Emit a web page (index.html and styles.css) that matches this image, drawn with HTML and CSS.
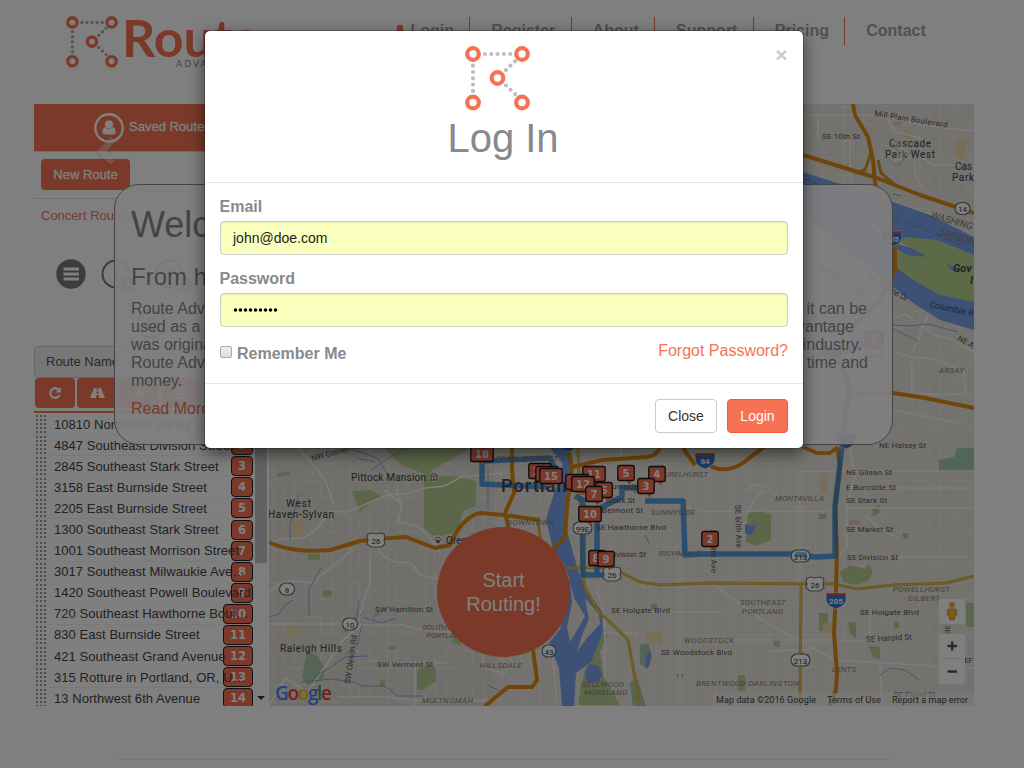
FILE: index.html
```html
<!DOCTYPE html>
<html lang="en">
<head>
<meta charset="utf-8">
<title>Route Advantage</title>
<link rel="stylesheet" href="styles.css">
</head>
<body>
<svg class="defs" aria-hidden="true">
  <symbol id="mark" viewBox="0 0 65 65">
    <g fill="none" stroke="#bcbec0" stroke-width="4.2" stroke-linecap="round" stroke-dasharray="0 6.3">
      <path d="M20 8H46M8 19.7V46M50 15.3L39 26M41 39.5L52 50"/>
    </g>
    <g fill="#fff" stroke="#f67252" stroke-width="4.2">
      <circle cx="8" cy="8" r="5.8"/><circle cx="57" cy="8" r="5.8"/><circle cx="32.5" cy="32" r="5.8"/><circle cx="8" cy="56.5" r="5.8"/><circle cx="57" cy="56.5" r="5.8"/>
    </g>
  </symbol>
  <symbol id="markdark" viewBox="0 0 65 65">
    <g fill="none" stroke="#a9abad" stroke-width="4.2" stroke-linecap="round" stroke-dasharray="0 6.3">
      <path d="M20 8H46M8 19.7V46M50 15.3L39 26M41 39.5L52 50"/>
    </g>
    <g fill="#fff" stroke="#f67252" stroke-width="4.2">
      <circle cx="8" cy="8" r="5.8"/><circle cx="57" cy="8" r="5.8"/><circle cx="32.5" cy="32" r="5.8"/><circle cx="8" cy="56.5" r="5.8"/><circle cx="57" cy="56.5" r="5.8"/>
    </g>
  </symbol>
  <symbol id="user" viewBox="0 0 16 16"><circle cx="8" cy="4.500" r="4.300"/><path d="M4.200 7.800C1.500 7.800 1 10 1 13c0 1.500 1 2.500 2.500 2.500h9c1.500 0 2.500-1 2.500-2.500 0-3-.5-5.200-3.200-5.200C10 9.800 6 9.800 4.200 7.800z"/></symbol>
</svg>

<header class="header">
  <svg class="logo" width="220" height="60" viewBox="0 0 220 60">
    <use href="#markdark" x="0" y="0" width="52" height="52"/>
    <text x="56" y="41" class="logo-name">Route</text>
    <text x="110" y="51" class="logo-sub">ADVANTAGE</text>
  </svg>
  <nav class="nav">
    <a class="nav-item"><svg width="12" height="13" fill="#f67252"><use href="#user" width="12" height="13"/></svg> Login</a>
    <a class="nav-item">Register</a>
    <a class="nav-item">About</a>
    <a class="nav-item">Support</a>
    <a class="nav-item">Pricing</a>
    <a class="nav-item">Contact</a>
  </nav>
</header>

<main class="main">
  <aside class="sidebar">
    <div class="saved">
      <svg width="30" height="30" viewBox="0 0 30 30"><circle cx="15" cy="15" r="13.700" fill="none" stroke="#fff" stroke-width="2.400"/><use href="#user" x="7.500" y="6.500" width="15" height="16" fill="#fff"/></svg>
      <span>Saved Routes</span>
    </div>
    <div class="new"><button class="new-btn">New Route</button></div>
    <a class="concert">Concert Route</a>
    <div class="tools">
      <svg width="190" height="80" viewBox="0 0 190 80">
        <circle cx="16" cy="16" r="14.700" fill="#77787b"/><path d="M8.500 11h15.500M8.500 16h15.500M8.500 21h15.500" stroke="#fff" stroke-width="2.800"/>
        <circle cx="61" cy="16" r="13.500" fill="#fff" stroke="#77787b" stroke-width="2"/>
        <path d="M61 8v4M61 14v9" stroke="#77787b" stroke-width="3"/>
        <rect x="67" y="19" width="11" height="14" rx="3" fill="#f67252"/><text x="69" y="30" class="tool-count">0</text>
        <circle cx="114" cy="16" r="13.500" fill="#fff" stroke="#77787b" stroke-width="2"/><path d="M106 20L120 10M108 13l11 8" stroke="#77787b" stroke-width="2"/>
        <rect x="120" y="19" width="17" height="14" rx="3" fill="#f67252"/><text x="122" y="30" class="tool-count">17</text>
        <circle cx="96" cy="66" r="13.500" fill="#fff" stroke="#77787b" stroke-width="2"/><circle cx="96" cy="66" r="5" fill="none" stroke="#77787b" stroke-width="4" stroke-dasharray="3 1"/>
      </svg>
    </div>
    <div class="route-name">Route Name</div>
    <div class="actions">
      <button><svg width="14" height="14" viewBox="0 0 14 14"><path d="M10.800 4A4.800 4.800 0 1 0 11.500 9" fill="none" stroke="#fff" stroke-width="2.300"/><path d="M13 1v5.500H7.500z" fill="#fff"/></svg></button>
      <button><svg width="15" height="12" viewBox="0 0 15 12"><path d="M4 1h2.700L6.500 3h2L8.300 1H11l4 10H9L8.700 8H6.300L6 11H0zM6.300 4.500v2h2.400v-2z" fill="#fff" fill-rule="evenodd"/></svg></button>
      <button><svg width="12" height="12"><path d="M6 1v10M1 6h10" stroke="#fff" stroke-width="3"/></svg></button>
      <button><svg width="12" height="12"><path d="M1 1h8l2 2v8H1zM3 1v3h5V1M3 11V7h6v4" fill="none" stroke="#fff" stroke-width="1.500"/></svg></button>
      <button></button>
    </div>
    <div class="stops">
      <div class="list">
        <div class="stop"><span>10810 Northeast Sandy B…</span><b>1</b></div>
        <div class="stop"><span>4847 Southeast Division Street</span><b>2</b></div>
        <div class="stop"><span>2845 Southeast Stark Street</span><b>3</b></div>
        <div class="stop"><span>3158 East Burnside Street</span><b>4</b></div>
        <div class="stop"><span>2205 East Burnside Street</span><b>5</b></div>
        <div class="stop"><span>1300 Southeast Stark Street</span><b>6</b></div>
        <div class="stop"><span>1001 Southeast Morrison Street</span><b>7</b></div>
        <div class="stop"><span>3017 Southeast Milwaukie Ave…</span><b>8</b></div>
        <div class="stop"><span>1420 Southeast Powell Boulevard</span><b>9</b></div>
        <div class="stop"><span>720 Southeast Hawthorne Boul…</span><b>10</b></div>
        <div class="stop"><span>830 East Burnside Street</span><b>11</b></div>
        <div class="stop"><span>421 Southeast Grand Avenue</span><b>12</b></div>
        <div class="stop"><span>315 Rotture in Portland, OR, U…</span><b>13</b></div>
        <div class="stop"><span>13 Northwest 6th Avenue</span><b>14</b></div>
      </div>
      <div class="scroll"><div class="thumb"></div><div class="arrow"></div></div>
    </div>
  </aside>

  <svg class="map" width="705" height="602" viewBox="269 104 705 602">
    <defs>
      <pattern id="grid" width="20" height="16" patternUnits="userSpaceOnUse"><path d="M0 3H20M0 11H20M4 0V16M10 0V16M16 0V16" stroke="#f7f5ef" stroke-width=".7" opacity=".6"/></pattern>
      <pattern id="wide" width="38" height="34" patternUnits="userSpaceOnUse"><path d="M0 5H17V22H38M28 0V22M8 5V34" fill="none" stroke="#f7f5ef" stroke-width=".9" opacity=".6"/></pattern>
      <g id="pin"><path d="M-6-7.500H6a2 2 0 0 1 2 2v11a2 2 0 0 1-2 2L3.500 11.500.5 7.500H-6a2 2 0 0 1-2-2v-11a2 2 0 0 1 2-2z" fill="#f67252"/><rect x="-8.200" y="-7.500" width="16.400" height="15" rx="2" fill="none" stroke="#181818" stroke-width="1.300"/></g>
      <g id="pinw"><path d="M-9-7.500H9a2 2 0 0 1 2 2v11a2 2 0 0 1-2 2H3L0 11.500-3 7.500H-9a2 2 0 0 1-2-2v-11a2 2 0 0 1 2-2z" fill="#f67252"/><rect x="-11.200" y="-7.500" width="22.400" height="15" rx="2" fill="none" stroke="#181818" stroke-width="1.300"/></g>
      <g id="interstate"><path d="M-9-7H9C12 2 8 6 0 9-8 6-12 2-9-7z" fill="#3478c8" stroke="#e9e5dc" stroke-width=".8"/><path d="M-9-7L-5-6 0-7 5-6 9-7 10-4H-10z" fill="#d84e4a"/></g>
      <g id="us26"><path d="M-8-6l4-1 4 1 4-1 4 1 1 3-1 3 1 4-4 3H-5l-4-3 1-4-1-3z" fill="#fff" stroke="#777" stroke-width="1.200"/><text y="4" class="shield">26</text></g>
    </defs>
    <rect x="269" y="104" width="705" height="602" fill="#e9e5dc"/>
    <rect x="269" y="448" width="225" height="258" fill="#e3dfd7"/>
    <rect x="269" y="104" width="225" height="602" fill="url(#wide)"/>
    <rect x="600" y="448" width="240" height="258" fill="url(#grid)"/>
    <rect x="495" y="448" width="105" height="258" fill="url(#wide)"/>
    <rect x="840" y="104" width="134" height="602" fill="url(#wide)"/>
    <rect x="803" y="104" width="60" height="90" fill="url(#wide)"/>

    <g fill="#b9cf94">
      <path d="M384 448h86l-20 12-25 14-24-9zM352 491l18-1 14 7-14 6-10 9zM424 462l8-5v19h23l21 5v25l-13 5-5 20-22 7-6-5-6-5z"/>
      <path d="M748 513l14-2 9 4v25l-14 6-11-4zM840 572l10-7 15 4 4-5 4 9-6 9-12 3-12-3zM417 670l14-5 5 4v12l-12 9h-7zM819 613h9v18h-9zM738 675h7v16h-7zM633 485l15-5 2 6-16 8zM868 646l12 1v12l-7-2zM848 622h8v16l-6-4zM966 603h8v24h-8zM872 508l8-3-1 8-6 4z"/>
      <path d="M277 473l14-2-2 4-12 2zM308 554h12v6h-12zM323 590l10 1-2 6-9-1zM389 646h6v4h-6zM380 680h5v7h-5zM651 604h6v5h-6zM774 638l6 2-1 8-6-3zM819 514h7v5h-7zM903 533h5v6h-5zM894 622h5v6h-5zM676 674h8v3h-8zM600 626l8 8-8 18 4 25 16 28H578l3-20 7-26zM455 630l9 7-4 9-8-4z"/>
      <path d="M823 206h10v4h-10zM941 264l10-1-1 6-9 1z"/>
    </g>
    <path d="M939 460l15-3 3-9h17v24h-35z" fill="#a5ccb0"/><path d="M307 652l10 3 8 13-2 12-16 5-5-8z" fill="#a9c8ab"/><path d="M640 645l8-3 4 15-4 12-8-5zM630 682l8-2 8 26H633z" fill="#a9c8ab"/>
    <g fill="#f0dab0"><path d="M291 519h12v18h-12zM285 627h15v10h-15zM645 633h18v11h-18zM823 623h10v10h-10zM820 473h8v20h-8zM955 139h12v15l-6 7-6-9zM903 129h8v9h-8z"/></g>
    <path d="M849 520h10v5h-10zM893 123l8-2v4h-8z" fill="#efc5bf"/>

    <g fill="none" stroke="#faf8f3" stroke-width="1.600" stroke-linecap="round" stroke-linejoin="round">
      <path d="M269 542l14-3 20-1c15-7 20-17 27-27l16 1c30-10 37-20 59-18l20-6 20-2 16-9 40-4M298 448l18 20 10 14 8 22M384 490l18 14-4 18 20 4 10 9 12 18M397 490l4 15M352 550c-18 16-26 20-34 28l-10 5c-20-5-30 0-39 10M269 624H343L352 625H402l16 4 20 3h50M362 625l-18 14-15 22-9 13-12 18-23-14-16 28M370 557v24l-12 40M378 548c5 12 18 16 32 14l10 13 18 4M340 697h45l25 3h90M370 660l14 3h64M415 706v-45"/>
      <path d="M482 655l4 14 20 4M552 650l5 56M621 448v34M597 590l8 28v60M600 633h37M640 612h80M680 560v146M714 585l56 40 66 35 80 5 58 3M770 651l45-2M800 472v130M700 511h130M800 471h174M860 488h114M850 508h124M866 515l12 13 20 10M875 557h90M870 612v25M845 641h30M880 665l2 41M850 448l5 28-8 26v46l-8 8M700 640h145M748 489l6-4 14 2 10 10M747 514l8-16 8-6"/>
      <path d="M803 115h70l70 13 31 3M818 118v20M850 137v45M886 116l8 15 36 10M893 152c20 5 28 4 33 8l8 5h25M915 165v11l8 12M803 182l40 14 40 4 50 15M893 318l12-4 28 20 20 6 21 12M893 352l18 5 24 2 29 13 1 22M912 362v42M928 315l-15 37M893 394h72M893 410l70 14"/>
    </g>
    <g fill="none" stroke="#8fa8df" stroke-width="1"><path d="M269 617l10-3 6-9 8-5M290 540v-15l9-31M309 616v-27l12-21M345 632l12-17 2-14M355 620l10-9M373 617l16-11M363 617l18 6 16-5M316 676l15-9 14-10 23-1M301 682l30-3 22 3 10 4h22l13 10h25M349 448l28 10 12 18M371 470l22-15 17-7M375 462l-18-4M362 625l-5 20-12 10M893 325l15 1 20-2 30 8M893 329l25 12M880 675l10-7 15 2 14 10M645 535l5 10M487 685l15 7M488 468v40"/></g>

    <g fill="#7ba2ef">
      <path d="M530 448h20l13 16-6 20-11 35 7 30 11 15 5 13-1 20-8 32-11 14 10 25 3 38h12l2-33 15-11 12-30-1-20-15-21-8-18-7-24-7-26 5-31 2-27-4-17z"/>
      <path d="M803 172l40 13 50 17 37 13 44 22v93l-34-10-27-17-20-16-45-37-45-35z"/><path d="M752 526l3-2v5l-4 6-6-2v-9zM646 656l5-6-1 14-5 5zM590 664l8 1 4 9-3 8-12 1-2-11z"/>
    </g>
    <path d="M570 582l4 16 11 18-10 18-5 8-3-15 5-25zM585 598l14 16 1 10-13 14-10 14 5-17 7-16z" fill="#e9e5dc"/>
    <path d="M893 243l14-6 30 3 37 15v47l-34-7-27-15-20-15z" fill="#b9d58e"/><path d="M850 208l60 40-20-4z" fill="#e9e5dc"/>
    <path d="M896 248l28 8-15-1zM947 264l10 5-5 1zM893 194l8 2M893 243l22 7 10 6-20-3z" fill="#7ba2ef" stroke="#7ba2ef"/>
    <path d="M803 178l90 38 81 35" fill="none" stroke="#6682b8" stroke-dasharray="7 4"/>

    <g fill="none" stroke-linejoin="round">
      <g stroke="#d6ac3e" stroke-width="3"><path d="M567 568l43-1 30 15 20 3 50-2 123 1 24 5 36-4 54-2 27-7M801 584l-1 122M578 448l2 60 2 59 3 20 12 23 16 15 15 15 5 27 7 39M510 515l28 6 3 25"/></g>
      <g stroke="#e3c15b" stroke-width="1.200"><path d="M567 568l43-1 30 15 20 3 50-2 123 1 24 5 36-4 54-2 27-7M801 584l-1 122M578 448l2 60 2 59 3 20 12 23 16 15 15 15 5 27 7 39"/></g>
      <g stroke="#e08a12" stroke-width="4"><path d="M269 542c15 8 35 10 61 8l30-9 16-2 30-2 29 11 15-3c8-20 20-30 30-32l23 2 37 5M512 448v22l2 23-9 20 5 20M568 448l4 19-5 40-2 30-12 12M533 650l4 30-5 7-24 0-23 19M572 467l31-7 44-3c10-2 10-5 13-9M683 448l12 17M703 459c8 10 20 14 37 6l24-18M803 447l14 6h13l8-6M837 448l3 19-5 40 2 43-1 40-2 43 3 40-1 17-6 16"/>
      <path d="M853 104l2 11 13 22 5 23 2 23 13 34 7 33v20l-15 30-28 27M803 155l74 23 43 17 54 18M842 420l6-20 12-7h33l27 4 54 11"/></g>
      <path d="M871 153l-6 17-10 3M878 160l3 13 14 12" stroke="#d59428" stroke-width="3"/>
      <path d="M875 340l-40 15 11 20 3 15-7 57-7 60v49l-19 1-26-3h-90l-15 1-2-54h-38M655 488h-33v9l-20 10-5 10v60M615 575h-32v-75l-8-4M482 455v29l66 3M484 461l66-3 5 12" stroke="#2683dc" stroke-width="5.500" opacity=".75"/>
    </g>

    <g class="town">
      <text x="286" y="507" textLength="25">West</text><text x="268" y="518" textLength="66">Haven-Sylvan</text><text x="280" y="652" textLength="62">Raleigh Hills</text><text x="446" y="544">Oregon Zoo</text><text x="351" y="481" textLength="75">Pittock Mansion</text>
      <text x="889" y="147" textLength="42">Cascade</text><text x="885" y="158" textLength="50">Park West</text><text x="955" y="170">Cas</text><text x="952" y="181" textLength="22">Park</text><text x="953" y="272" class="gov">Gov</text><text x="970" y="284" class="gov">I</text>
    </g>
    <g class="street">
      <text x="375" y="612" textLength="58">SW Hamilton St</text><text x="377" y="667" textLength="56">SW Vermont St</text><text transform="translate(350 684) rotate(-82)" textLength="49">SW Oleson Rd</text><text transform="translate(312 461) rotate(-15)">NW Cornell Rd</text>
      <text x="607" y="489">Burnside St</text><text x="607" y="503">Stark St</text><text x="602" y="513" textLength="41">Belmont St</text><text x="596" y="530" textLength="70">SE Hawthorne Blvd</text><text x="609" y="557" textLength="37">Division St</text><text x="611" y="613" textLength="59">SE Holgate Blvd</text><text x="661" y="655" textLength="71">SE Woodstock Blvd</text>
      <text transform="translate(735 505) rotate(88)" textLength="43">SE 60th Ave</text><text transform="translate(710 530) rotate(88)" textLength="43">SE 50th Ave</text>
      <text x="879" y="448" textLength="47">NE Halsey St</text><text x="846" y="475" textLength="46">NE Glisan St</text><text x="846" y="490" textLength="50">E Burnside St</text><text x="846" y="503" textLength="41">SE Stark St</text><text x="846" y="532" textLength="47">SE Market St</text><text x="847" y="560" textLength="51">SE Division St</text><text x="860" y="615" textLength="59">SE Holgate Blvd</text><text transform="translate(866 642) rotate(-3)" textLength="46">SE Harold St</text><text x="894" y="697">SE Flavel St</text><text x="961" y="663" textLength="12">SE F</text>
      <text x="822" y="139" textLength="38">SE 10th St</text><text transform="translate(874 116) rotate(9)" textLength="74">Mill Plain Boulevard</text><text transform="translate(867 279) rotate(30)" textLength="45">NE Marine Dr</text><text transform="translate(819 270) rotate(30)">NE Airport Way</text><text transform="translate(957 340) rotate(28)">NE A</text><text transform="translate(945 625) rotate(90)">3E</text>
    </g>
    <text transform="translate(929 307) rotate(12)" class="water">Columbia R</text>
    <g class="area">
      <text x="496" y="461" textLength="62">PEARL DISTRICT</text><text x="507" y="525" textLength="47">DOWNTOWN</text><text x="422" y="630">SOUTHWEST</text><text x="426" y="638">PORTLAND</text><text x="480" y="668" textLength="42">HILLSDALE</text><text x="422" y="703" textLength="51">MULTNOMAH</text><text x="582" y="687" textLength="47">SELLWOOD -</text><text x="584" y="695" textLength="43">MORELAND</text>
      <text x="655" y="477" textLength="53">LAURELHURST</text><text x="651" y="515" textLength="44">SUNNYSIDE</text><text x="659" y="556" textLength="42">RICHMOND</text><text x="775" y="501" textLength="49">MONTAVILLA</text><text x="740" y="605" textLength="46">SOUTHEAST</text><text x="742" y="614" textLength="41">PORTLAND</text><text x="684" y="643" textLength="50">WOODSTOCK</text><text x="696" y="686" textLength="103">BRENTWOOD-DARLINGTON</text><text x="832" y="672" textLength="24">LENTS</text><text x="893" y="592" textLength="57">POWELLHURST</text><text x="903" y="601" textLength="37">- GILBERT</text><text x="939" y="373" textLength="25">ARGAY</text>
      <text transform="translate(930 218) rotate(16)" class="state">WASHING</text><text transform="translate(937 235) rotate(16)" class="state">OREGON</text>
    </g>
    <text x="501" y="492" class="portland" textLength="78">Portland</text>
    <circle cx="434" cy="477" r="5" fill="#eee"/><path d="M430 476l4-3 4 3zM431 477v3M434 477v3M437 477v3M430 480h8" stroke="#704b40" stroke-width=".9" fill="none"/>
    <circle cx="438" cy="540" r="5" fill="#eee"/><g fill="#665046"><ellipse cx="438" cy="541.500" rx="2" ry="1.700"/><circle cx="435" cy="539.500" r=".8"/><circle cx="437" cy="537.500" r=".8"/><circle cx="439.500" cy="537.500" r=".8"/><circle cx="441" cy="539.500" r=".8"/></g>
    <use href="#us26" x="376" y="540"/><use href="#us26" x="612" y="574"/><use href="#us26" x="815" y="584"/>
    <g fill="#fff" stroke="#666" stroke-width="1.100"><rect x="279.500" y="583" width="15" height="12" rx="6"/><rect x="342.500" y="618" width="15" height="12" rx="6"/><rect x="542" y="645" width="14" height="12" rx="6"/><rect x="573" y="522" width="19" height="12" rx="6"/><rect x="791" y="550" width="19" height="12" rx="6"/><rect x="791" y="654" width="19" height="12" rx="6"/><rect x="955" y="202.500" width="15" height="12" rx="6"/><rect x="866" y="349" width="18" height="12" rx="6"/></g>
    <path d="M795 554.500l12 .5" stroke="#2683dc" stroke-width="5.500" opacity=".5"/>
    <g class="shield"><text x="287" y="592.500">8</text><text x="350" y="627.500">10</text><text x="549" y="654.500">43</text><text x="582.500" y="531.500">99E</text><text x="800.500" y="559.500">213</text><text x="800.500" y="663.500">213</text><text x="962.500" y="212">14</text><text x="875" y="358">30B</text></g>
    <use href="#interstate" x="568" y="443"/><use href="#interstate" x="705" y="460"/><use href="#interstate" x="836" y="600"/><use href="#interstate" x="892" y="238"/><use href="#interstate" x="846" y="440"/><use href="#interstate" x="832" y="353"/>
    <g class="shield route-num"><text x="705" y="464">84</text><text x="836" y="604">205</text><text x="892" y="242">205</text></g>

    <g class="pins">
      <use href="#pinw" x="482" y="454"/><text x="482" y="458">18</text><use href="#pinw" x="540" y="471"/><text x="536" y="475">1</text><use href="#pinw" x="547" y="474"/><use href="#pinw" x="551" y="476"/><text x="551" y="480">15</text>
      <use href="#pinw" x="594" y="474"/><text x="594" y="478">11</text><use href="#pinw" x="577" y="482"/><use href="#pin" x="604" y="490"/><text x="604" y="494">6</text><use href="#pinw" x="583" y="484"/><text x="583" y="488">12</text><use href="#pin" x="594" y="494"/><text x="594" y="498">7</text>
      <use href="#pin" x="626" y="473"/><text x="626" y="477">5</text><use href="#pin" x="657" y="474"/><text x="657" y="478">4</text><use href="#pin" x="646" y="486"/><text x="646" y="490">3</text><use href="#pinw" x="590" y="514"/><text x="590" y="518">10</text><use href="#pin" x="597" y="558"/><text x="596" y="562">8</text><use href="#pin" x="606" y="559"/><text x="606" y="563">9</text><use href="#pin" x="710" y="539"/><text x="710" y="543">2</text><use href="#pin" x="874" y="339"/><text x="874" y="343">1</text>
    </g>
    <rect x="713" y="693" width="261" height="13" fill="#f5f5f5" opacity=".65"/>
    <g class="credit"><text x="716" y="702.500" textLength="100">Map data ©2016 Google</text><text x="827" y="702.500" textLength="54">Terms of Use</text><text x="892" y="702.500" textLength="76">Report a map error</text></g>
    <text x="275" y="700" class="google" textLength="57"><tspan fill="#4285f4">G</tspan><tspan fill="#ea4335">o</tspan><tspan fill="#fbbc05">o</tspan><tspan fill="#4285f4">g</tspan><tspan fill="#34a853">l</tspan><tspan fill="#ea4335">e</tspan></text>
    <rect x="939" y="599" width="26" height="25" rx="2" fill="#fff"/><rect x="939" y="634" width="26" height="50" rx="2" fill="#fff"/>
    <circle cx="952" cy="605" r="3" fill="#f5b733"/><path d="M948 609h8l1 6-2 1-1 4h-4l-1-4-2-1z" fill="#f5b733" stroke="#b98622" stroke-width=".7"/>
    <path d="M947.500 646h9.500M952.200 641.500v9M947.500 671.500h9.500" stroke="#555" stroke-width="2.400"/><path d="M943 658.500h18" stroke="#ddd"/>
    <ellipse cx="503.500" cy="592" rx="66.500" ry="65" fill="#f67252"/>
    <g class="start"><text x="503.500" y="587">Start</text><text x="503.500" y="611">Routing!</text></g>
  </svg>
</main>
<hr class="rule">

<section class="welcome">
  <h1>Welcome</h1>
  <h2>From here</h2>
  <p class="pair r1"><span>Route Advantage</span><span>it can be</span></p>
  <p class="pair r2"><span>used as a</span><span>advantage</span></p>
  <p class="pair r3"><span>was originally</span><span>industry.</span></p>
  <p class="pair r4"><span>Route Advantage</span><span>time and</span></p>
  <p class="pair"><span>money.</span></p>
  <a class="more">Read More</a>
</section>
<svg class="chev chev-left" width="22" height="30" viewBox="0 0 22 30"><path d="M15 1l5 4-9 10 8 10-5 4L1 15z"/></svg>
<svg class="chev chev-right" width="22" height="30" viewBox="0 0 22 30"><path d="M7 1L2 5l9 10-8 10 5 4 13-14z"/></svg>

<div class="backdrop"></div>
<div class="modal">
  <div class="modal-header">
    <span class="close">×</span>
    <svg width="65" height="65"><use href="#mark" width="65" height="65"/></svg>
    <h3>Log In</h3>
  </div>
  <form class="modal-body">
    <label>Email</label>
    <div class="input">john@doe.com</div>
    <label>Password</label>
    <div class="input"><svg width="46" height="6"><path d="M2.500 3H46" stroke="#000" stroke-width="3.600" stroke-linecap="round" stroke-dasharray="0 5"/></svg></div>
    <div class="options">
      <label class="remember"><span class="check"></span>Remember Me</label>
      <a>Forgot Password?</a>
    </div>
  </form>
  <div class="modal-footer">
    <button class="btn" type="button">Close</button>
    <button class="btn primary" type="button">Login</button>
  </div>
</div>
</body>
</html>
```

FILE: styles.css
```css
* { box-sizing: border-box; }
body { margin: 0; height: 768px; overflow: hidden; position: relative; background: #fff; font-family: "Liberation Sans", Arial, sans-serif; font-size: 16px; color: #87898c; }
button { font-family: inherit; }
.defs { display: block; width: 0; height: 0; }
.header { height: 104px; display: flex; align-items: flex-start; padding: 16px 0 0 66px; }
.logo { flex: none; overflow: visible; }
.logo-name { font: bold 52px Lato, sans-serif; fill: #f67252; }
.logo-sub { font: 9px "DejaVu Sans", sans-serif; letter-spacing: 2px; fill: #87898c; }
.nav { display: flex; margin: 1px 0 0 87px; font-weight: bold; line-height: 27px; color: #a2a2a4; }
.nav-item { height: 28px; padding: 0 15.300px 0 21px; border-right: 1px solid #f67252; white-space: nowrap; }
.nav-item:last-child { border: 0; }
.nav-item svg { vertical-align: -1px; }

.main { display: flex; width: 940px; height: 602px; margin-left: 34px; isolation: isolate; }
.map { display: block; flex: none; font-family: Roboto, sans-serif; }
.sidebar { width: 235px; height: 602px; overflow: hidden; display: flex; flex-direction: column; font-size: 13px; }
.saved { height: 48px; flex: none; background: #f67252; border-bottom: 1px solid #ddd; color: #fff; display: flex; align-items: center; gap: 5px; padding-left: 60px; -webkit-text-stroke: .3px #fff; }
.saved span { margin-top: -3px; }
.new { height: 47px; flex: none; border-bottom: 1px solid #ddd; padding: 7px; }
.new-btn { width: 89px; height: 31px; border: 0; border-radius: 4px; background: #f67252; color: #fff; font-size: 13px; -webkit-text-stroke: .3px #fff; padding: 0; }
.concert { color: #f67252; line-height: 33px; padding-left: 7px; }
.tools { height: 114px; flex: none; padding: 26px 0 0 21px; }
.tool-count { font: bold 10px "Liberation Sans", sans-serif; fill: #fff; }
.route-name { height: 32px; flex: none; background: #eee; border: 1px solid #ccc; border-radius: 4px; line-height: 30px; padding-left: 11px; color: #555; }
.actions { display: flex; gap: 2px; height: 35px; flex: none; border-bottom: 2px solid #f67252; padding: 0 1px 3px; }
.actions button { width: 40px; height: 30px; border: 0; border-radius: 4px; background: #f67252; padding: 0; display: flex; align-items: center; justify-content: center; flex: none; }
.stops { display: flex; flex: 1; min-height: 0; }
.list { width: 219px; overflow: hidden; padding-top: 1px; }
.stop { height: 21.1px; display: flex; align-items: center; color: #444; white-space: nowrap; border-bottom: 1px solid #f2f2f2; padding-left: 20px; background: radial-gradient(circle at 2px 2px, #999 .8px, transparent 1.200px) 1px 0 / 4px 4px repeat-y, radial-gradient(circle at 2px 2px, #999 .8px, transparent 1.200px) 5px 0 / 4px 4px repeat-y, radial-gradient(circle at 2px 2px, #999 .8px, transparent 1.200px) 9px 0 / 4px 4px repeat-y; }
.stop span { flex: 1; width: 0; letter-spacing: 0.05px; position: relative; z-index: 1; }
.stop b { height: 20px; padding: 0 6px; border: 1px solid #222; border-radius: 4px; background: #f67252; color: #fff; text-align: center; line-height: 18px; font-family: "DejaVu Sans", sans-serif; font-size: 11.500px; }
.scroll { width: 12px; margin-left: 2px; background: #fafafa; display: flex; flex-direction: column; }
.thumb { height: 150px; background: #c4c4c4; }
.arrow { margin: 133px 0 0 2px; width: 0; height: 0; border: 4px solid transparent; border-top-color: #333; }
.rule { width: 777px; margin: 53px 0 0 115px; border: 0; border-top: 1px solid #eee; }

.town { font: 10px Roboto, sans-serif; fill: #4a4a4a; stroke: #4a4a4a; stroke-width: .1px; }
.gov { font-size: 11px; font-style: italic; font-weight: bold; }
.street { font: 8px Roboto, sans-serif; fill: #555; }
.area { font: italic 8px Roboto, sans-serif; fill: #857e72; }
.state { font-size: 10px; }
.water { font: italic 9px Roboto, sans-serif; fill: #354d7c; }
.portland { font: 500 18px Roboto, sans-serif; fill: #444; letter-spacing: 1px; }
.shield { font: 8px Roboto, sans-serif; fill: #333; text-anchor: middle; }
.route-num { fill: #fff; font-weight: bold; }
.pins { font: bold 10px "DejaVu Sans", sans-serif; fill: #fff; text-anchor: middle; }
.credit { font: 9px Roboto, sans-serif; fill: #444; }
.google { font: 600 19px "Open Sans", sans-serif; }
.start { font: 20px "Liberation Sans", sans-serif; fill: #fff; text-anchor: middle; }

.welcome { position: absolute; left: 114px; top: 184px; width: 779px; height: 261px; padding: 20px 16px; border: 1px solid #888; border-radius: 25px; background: rgba(255,255,255,.9); }
.welcome h1 { margin: 0 0 18px; font-size: 36px; font-weight: 400; line-height: 40px; }
.welcome h2 { margin: 0 0 10px; font-size: 24px; font-weight: 400; line-height: 27px; }
.pair { margin: 0; display: flex; justify-content: space-between; line-height: 18px; }
.r1 { padding-right: 9px; }
.r2 { padding-right: 22px; }
.r3 { padding-right: 14px; }
.r4 { padding-right: 8px; }
.more { display: block; margin-top: 10px; line-height: 18px; color: #f67252; }
.chev { position: absolute; top: 136px; fill: #fff; opacity: .35; filter: drop-shadow(0 1px 1px rgba(0,0,0,.6)); }
.chev-left { left: 96px; }
.chev-right { left: 889px; }

.backdrop { position: absolute; inset: 0; background: rgba(0,0,0,.5); }
.modal { position: absolute; left: 204px; top: 30px; width: 600px; height: 419px; background: #fff; background-clip: padding-box; border: 1px solid rgba(0,0,0,.2); border-radius: 6px; box-shadow: 0 5px 15px rgba(0,0,0,.5); }
.modal-header { height: 152px; border-bottom: 1px solid #e5e5e5; padding-top: 15px; text-align: center; position: relative; }
.modal-header > svg { display: block; margin: 0 auto 0 260px; }
.modal-header h3 { margin: 5px 2px 0 0; font-size: 40px; font-weight: 400; line-height: 44px; }
.close { position: absolute; right: 15.500px; top: 13px; font-weight: bold; font-size: 21px; line-height: 21px; color: #ccc; }
.modal-body { height: 201px; padding: 15px; border-bottom: 1px solid #e5e5e5; }
.modal-body label { display: block; font-weight: bold; line-height: 18px; margin: 0 0 5px -.5px; }
.input { height: 34px; margin-bottom: 15px; border: 1px solid #ccc; border-radius: 4px; background: #faffbd; box-shadow: inset 0 1px 1px rgba(0,0,0,.075); padding: 0 12px; display: flex; align-items: center; font-size: 14px; color: #222; }
.options { display: flex; justify-content: space-between; line-height: 18px; }
.options a { color: #f67252; }
.modal-body .remember { display: flex; margin: 3px 0 0; }
.check { width: 12px; height: 12px; margin: 1px 5px 0 0; border: 1px solid #aaa; border-radius: 2px; background: linear-gradient(#eee, #ddd); }
.modal-footer { display: flex; justify-content: flex-end; gap: 10px; padding: 15px; }
.btn { width: 62px; height: 34px; padding: 0; border: 1px solid #ccc; border-radius: 4px; background: #fff; color: #333; font-size: 14px; }
.primary { width: 61px; background: #f67252; border-color: #f45a35; color: #fff; }
```
